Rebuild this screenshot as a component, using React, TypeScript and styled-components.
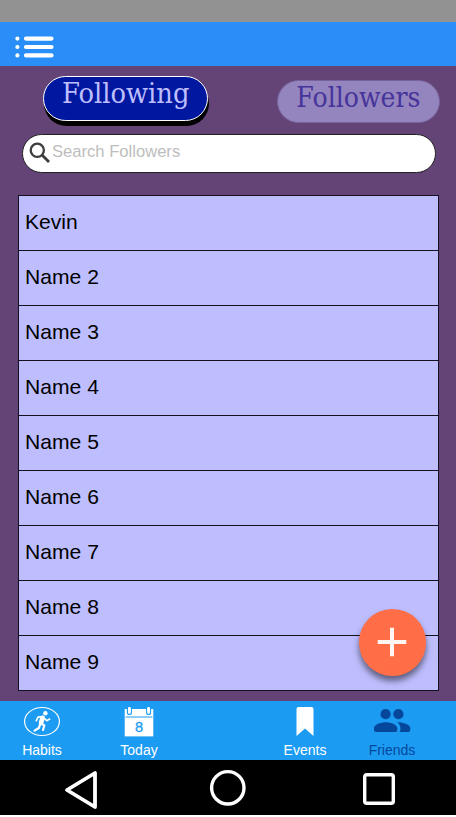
import React from "react";
import styled, { createGlobalStyle } from "styled-components";

const GlobalStyle = createGlobalStyle`
  * { box-sizing: border-box; }
  body { margin: 0; background: #fff; font-family: "Liberation Sans", Arial, sans-serif; }
`;

const Screen = styled.div`
  width: 456px;
  height: 815px;
  display: flex;
  flex-direction: column;
  background: #644377;
  overflow: hidden;
`;

const StatusBar = styled.div`
  height: 21.5px;
  flex: none;
  background: #929292;
`;

const AppBar = styled.header`
  height: 44.5px;
  flex: none;
  background: #2a8ef9;
  padding: 13px 0 0 14px;
`;

const Icon = styled.svg`
  display: block;
  flex: none;
`;

const Main = styled.main`
  height: 635px;
  flex: none;
  display: flex;
  flex-direction: column;
`;

const Tabs = styled.div`
  height: 68px;
  display: flex;
  justify-content: space-between;
  align-items: flex-start;
  padding: 10px 16px 0 43px;
`;

const Tab = styled.button<{ $active?: boolean }>`
  width: ${(p) => (p.$active ? 165 : 163)}px;
  height: ${(p) => (p.$active ? 45 : 43)}px;
  margin: ${(p) => (p.$active ? 0 : "4px 0 0")};
  padding: 0;
  display: flex;
  justify-content: center;
  border-radius: 23px;
  border: ${(p) => (p.$active ? "1.5px solid #fff" : "1px solid #77629b")};
  background: ${(p) => (p.$active ? "#00189f" : "#9585bf")};
  color: ${(p) => (p.$active ? "#bebeff" : "#46349a")};
  box-shadow: ${(p) => (p.$active ? "1px 5px 0 #000" : "none")};
`;

const TabLabel = styled.span<{ $stretch: number }>`
  font: 27px/34px "DejaVu Serif", serif;
  white-space: nowrap;
  transform: scaleX(${(p) => p.$stretch});
`;

const SearchBox = styled.label`
  height: 38.5px;
  margin: 0 20px 0 22px;
  flex: none;
  display: flex;
  align-items: center;
  padding-left: 6px;
  border: 1px solid #222;
  border-radius: 20px;
  background: #fff;
`;

const SearchInput = styled.input`
  flex: 1;
  min-width: 0;
  margin: 0 20px 2px 1px;
  padding: 0;
  border: 0;
  outline: 0;
  background: none;
  font: 16.6px "Liberation Sans", Arial, sans-serif;
  &::placeholder { color: #bdbdbd; opacity: 1; }
`;

const List = styled.ul`
  list-style: none;
  margin: 22.5px 17.5px 0 18px;
  padding: 0;
  height: 495.5px;
  display: grid;
  grid-template-rows: repeat(9, 1fr);
  gap: 1.3px;
  border: 1.3px solid #14101f;
  background: #14101f;
`;

const Row = styled.li`
  display: flex;
  align-items: center;
  padding: 0 0 1px 6px;
  background: #bebeff;
  font-size: 21.1px;
  color: #000;
`;

const AddButton = styled.button`
  position: absolute;
  left: 359px;
  top: 609px;
  width: 66.5px;
  height: 66.5px;
  padding: 0;
  border: 0;
  border-radius: 50%;
  background: #ff6e46;
  box-shadow: 0 5px 6px rgba(0, 0, 0, 0.5);
  display: grid;
  place-items: center;
`;

const BottomNav = styled.nav`
  height: 59px;
  flex: none;
  display: grid;
  grid-template-columns: 84px 110px 67px 88px 86px;
  background: #1c9bf3;
`;

const NavItem = styled.a<{ $column: number; $active?: boolean }>`
  grid-column: ${(p) => p.$column};
  display: flex;
  flex-direction: column;
  align-items: center;
  padding-top: 5px;
  font-size: 14px;
  line-height: 16px;
  color: ${(p) => (p.$active ? "#05489b" : "#fff")};
`;

const NavIcon = styled(Icon)`
  margin-bottom: 5px;
`;

const SystemBar = styled.footer`
  flex: 1;
  display: grid;
  grid-template-columns: 146px 152px 36px;
  padding: 9px 0 0 63px;
  background: #000;
`;

const names = ["Kevin", "Name 2", "Name 3", "Name 4", "Name 5", "Name 6", "Name 7", "Name 8", "Name 9"];

export default function App() {
  return (
    <Screen>
      <GlobalStyle />
      <StatusBar />
      <AppBar>
        <Icon width="42" height="24" viewBox="0 0 42 24" stroke="#fff" strokeWidth="4.2" strokeLinecap="round">
          <path d="M12 3.6h25.5M12 12h25.5M12 20.4h25.5M3.4 3.6h.01M3.4 12h.01M3.4 20.4h.01" />
        </Icon>
      </AppBar>
      <Main>
        <Tabs>
          <Tab $active><TabLabel $stretch={0.955}>Following</TabLabel></Tab>
          <Tab><TabLabel $stretch={0.935}>Followers</TabLabel></Tab>
        </Tabs>
        <SearchBox>
          <Icon width="22" height="22" viewBox="0 0 22 22" fill="none" stroke="#3d3d3d" strokeWidth="2.3">
            <circle cx="8.3" cy="8.3" r="6.6" />
            <path d="M13 13l7 7" strokeWidth="2.8" />
          </Icon>
          <SearchInput placeholder="Search Followers" />
        </SearchBox>
        <List>
          {names.map((name) => <Row key={name}>{name}</Row>)}
        </List>
      </Main>
      <BottomNav>
        <NavItem $column={1}>
          <NavIcon width="38" height="31" viewBox="0 0 38 31" fill="none" stroke="#fff" strokeLinecap="round" strokeLinejoin="round">
            <ellipse cx="19" cy="15.5" rx="17.4" ry="14" strokeWidth="1.2" />
            <circle cx="22.4" cy="7.2" r="2.2" fill="#fff" stroke="none" />
            <path d="M19.6 11.8l-1.6 5" strokeWidth="4.6" />
            <path d="M19.8 10.6l-4.8.6-1.7 3.5M21 12l2.7 2.7 3-1.6" strokeWidth="1.7" />
            <path d="M18.2 17.3l3.1 2.2-1.3 4.5M17.2 18.4L15.8 22l-4.2 2.6" strokeWidth="2.2" />
          </NavIcon>
          Habits
        </NavItem>
        <NavItem $column={2}>
          <NavIcon width="30" height="31" viewBox="0 0 30 31">
            <path d="M.7 3h28.6v27.4H.7z" fill="#fff" />
            <path d="M1.5 11h27" stroke="#1c9bf3" />
            <path d="M3.4 2v4.5a2 2 0 004 0V2M22.6 2v4.5a2 2 0 004 0V2" fill="#fff" stroke="#1c9bf3" strokeWidth="1.1" />
            <path d="M5.4 1v5M24.6 1v5" stroke="#fff" strokeWidth="2.2" />
            <text x="15" y="25.6" textAnchor="middle" fontFamily="Liberation Sans, sans-serif" fontSize="14.5" fill="#1c9bf3" stroke="#1c9bf3" strokeWidth=".3">8</text>
          </NavIcon>
          Today
        </NavItem>
        <NavItem $column={4}>
          <NavIcon width="18" height="31" viewBox="0 0 18 31">
            <path d="M2.5 1h13Q17.5 1 17.5 3v27L9 22.5.5 30V3Q.5 1 2.5 1z" fill="#fff" />
          </NavIcon>
          Events
        </NavItem>
        <NavItem $column={5} $active>
          <NavIcon width="38" height="31" viewBox="0 0 38 31" fill="currentColor">
            <circle cx="12.6" cy="8.2" r="5.1" />
            <circle cx="25.4" cy="8.2" r="5.1" />
            <path d="M1 22.2c0-4 7.5-6 11.7-6s11.6 2 11.6 6v1.8q0 2.1-2 2.1H3q-2 0-2-2.1zM24.3 16.2c4.5 0 13 1.8 13 6v1.8q0 2.1-2 2.1h-8.8q1-1 .9-3.7 0-4-3.1-6.2z" />
          </NavIcon>
          Friends
        </NavItem>
      </BottomNav>
      <SystemBar>
        <Icon width="36" height="42" viewBox="0 0 36 42" fill="none" stroke="#fff" strokeWidth="3.8" strokeLinejoin="round">
          <path d="M32 4v34L4 21z" />
        </Icon>
        <Icon width="38" height="38" viewBox="0 0 38 38" fill="none" stroke="#fff" strokeWidth="3.4">
          <circle cx="18.8" cy="18.8" r="16.2" />
        </Icon>
        <Icon width="36" height="40" viewBox="0 0 36 40" fill="none" stroke="#fff" strokeWidth="3.4">
          <rect x="3.7" y="5.7" width="28.6" height="28.6" rx="2" />
        </Icon>
      </SystemBar>
      <AddButton aria-label="Add friend">
        <Icon width="30" height="30" viewBox="0 0 30 30" stroke="#fff5f2" strokeWidth="4">
          <path d="M15 .7v28.6M.7 15h28.6" />
        </Icon>
      </AddButton>
    </Screen>
  );
}
